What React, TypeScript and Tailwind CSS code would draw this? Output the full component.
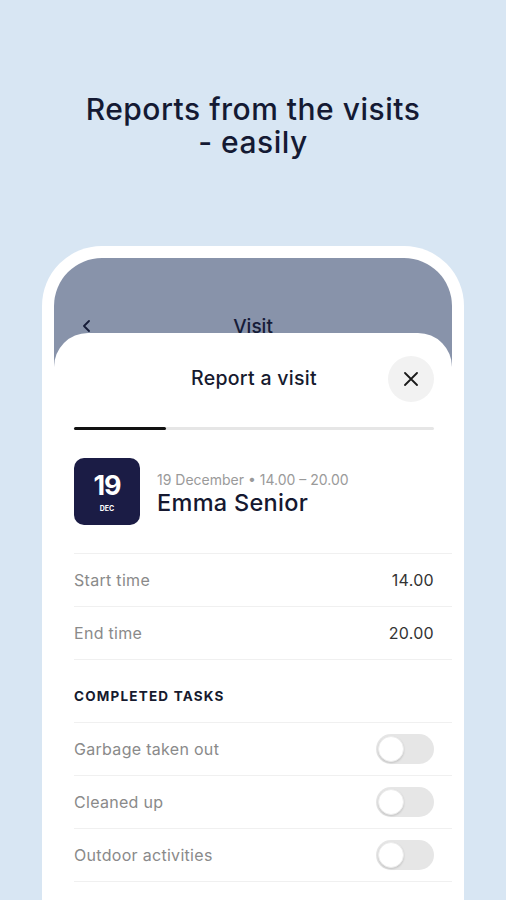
import React from "react";

const font = { fontFamily: "Inter, 'Noto Sans', sans-serif" };

function Toggle() {
  return (
    <div className="w-[58px] h-[30px] rounded-full bg-[#e6e6e6] flex items-center pl-[2px]">
      <div className="w-[26px] h-[26px] rounded-full bg-white shadow-[0_1px_2px_rgba(0,0,0,0.15)] border border-[#ececec]" />
    </div>
  );
}

function Row({ label, right }: { label: string; right: React.ReactNode }) {
  return (
    <div className="h-[53px] flex items-center justify-between pr-[18px] border-b border-[#f0f0f0]">
      <span className="text-[16px] tracking-[0.3px] text-[#8a8a8a]">{label}</span>
      {right}
    </div>
  );
}

export default function App() {
  return (
    <div className="w-[506px] h-[900px] overflow-hidden bg-[#d8e6f3] flex flex-col items-center" style={font}>
      <div className="pt-[93px] text-center text-[30px] leading-[33px] font-medium text-[#141a33] tracking-[0.5px]">
        <div>Reports from the visits</div>
        <div>- easily</div>
      </div>
      <div className="mt-[87px] w-[422px] flex-1 bg-white rounded-t-[60px] pt-[12px] px-[12px] flex flex-col">
        <div className="flex-1 bg-[#8893aa] rounded-t-[48px] overflow-hidden flex flex-col">
          <div className="h-[75px] relative flex items-end justify-center">
            <svg className="absolute left-[28px] top-[62px]" width="10" height="12" viewBox="0 0 10 12">
              <path d="M7 1 L2 6 L7 11" stroke="#161c38" strokeWidth="1.8" fill="none" strokeLinecap="round" strokeLinejoin="round" />
            </svg>
            <span className="text-[19px] font-medium text-[#161c38] leading-none translate-y-[3px]">Visit</span>
          </div>
          <div className="flex-1 bg-white rounded-t-[34px] pl-[20px] pt-[23px]">
            <div className="h-[46px] relative flex items-center justify-center pr-[18px]">
              <span className="text-[19.5px] tracking-[0.3px] font-medium text-[#161a2e]">Report a visit</span>
              <div className="absolute right-[18px] top-0 w-[46px] h-[46px] rounded-full bg-[#f2f2f2] flex items-center justify-center">
                <svg width="14" height="14" viewBox="0 0 14 14">
                  <path d="M1 1 L13 13 M13 1 L1 13" stroke="#1a1a1a" strokeWidth="1.8" strokeLinecap="round" />
                </svg>
              </div>
            </div>
            <div className="mt-[25px] mr-[18px] h-[3px] bg-[#e6e6e6] rounded-full flex">
              <div className="w-[92px] h-full bg-[#111111] rounded-full" />
            </div>
            <div className="mt-[28px] flex items-center gap-[17px] pb-[28px] border-b border-[#f0f0f0]">
              <div className="w-[66px] h-[67px] rounded-[10px] bg-[#1b1c45] flex flex-col items-center justify-center">
                <span className="text-white text-[27px] font-bold leading-none tracking-[-1px]">19</span>
                <span className="text-white text-[7px] font-bold leading-none mt-[6px]">DEC</span>
              </div>
              <div className="flex flex-col pt-[4px]">
                <span className="text-[14px] text-[#9a9a9a] leading-[17px]">19 December • 14.00 – 20.00</span>
                <span className="text-[23.5px] tracking-[0.3px] font-medium text-[#151830] leading-[29px]">Emma Senior</span>
              </div>
            </div>
            <Row label="Start time" right={<span className="text-[16px] tracking-[0.3px] text-[#333]">14.00</span>} />
            <Row label="End time" right={<span className="text-[16px] tracking-[0.3px] text-[#333]">20.00</span>} />
            <div className="h-[63px] flex items-center pt-[10px] border-b border-[#f0f0f0]">
              <span className="text-[13.5px] font-bold tracking-[1.2px] text-[#161a2e]">COMPLETED TASKS</span>
            </div>
            <Row label="Garbage taken out" right={<Toggle />} />
            <Row label="Cleaned up" right={<Toggle />} />
            <Row label="Outdoor activities" right={<Toggle />} />
          </div>
        </div>
      </div>
    </div>
  );
}
